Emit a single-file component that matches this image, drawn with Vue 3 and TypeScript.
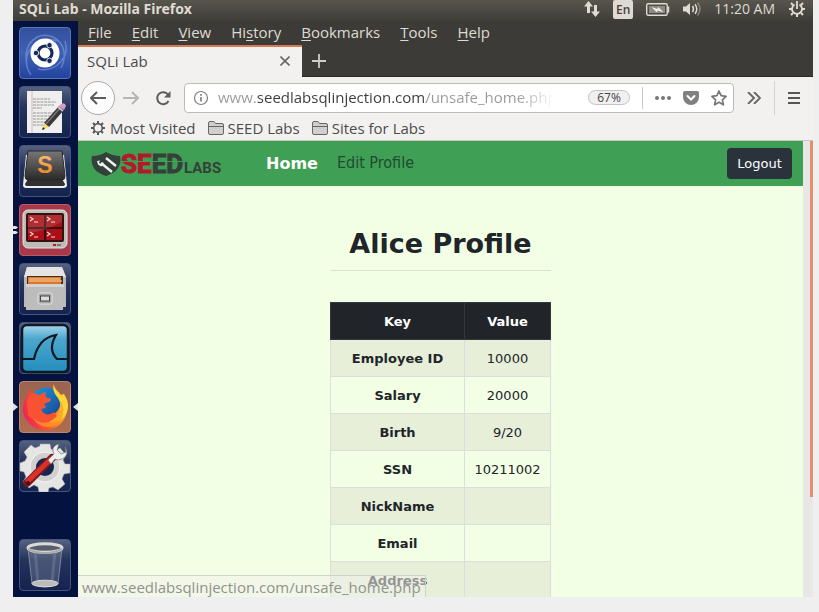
<script setup lang="ts">
import { ref } from 'vue'

interface MenuEntry { key: string; rest: string; before?: string }
interface ProfileRow { key: string; value: string }

const menus: MenuEntry[] = [
  { key: 'F', rest: 'ile' },
  { key: 'E', rest: 'dit' },
  { key: 'V', rest: 'iew' },
  { before: 'Hi', key: 's', rest: 'tory' },
  { key: 'B', rest: 'ookmarks' },
  { key: 'T', rest: 'ools' },
  { key: 'H', rest: 'elp' },
]

const rows: ProfileRow[] = [
  { key: 'Employee ID', value: '10000' },
  { key: 'Salary', value: '20000' },
  { key: 'Birth', value: '9/20' },
  { key: 'SSN', value: '10211002' },
  { key: 'NickName', value: '' },
  { key: 'Email', value: '' },
  { key: 'Address', value: '' },
]

const url = ref('www.seedlabsqlinjection.com/unsafe_home.php')
</script>

<template>
  <div class="desktop">
    <header class="panel">
      <span class="window-title">SQLi Lab - Mozilla Firefox</span>
      <div class="indicators">
        <svg class="ind-net" viewBox="0 0 18 18" width="18" height="18"><path d="M5.500 1 1 6.500h3V13h3V6.500h3zM12.500 17 8 11.500h3V5h3v6.500h3z" fill="#dfdbd2" /></svg>
        <span class="lang">En</span>
        <svg class="ind-bat" viewBox="0 0 24 13" width="24" height="13"><rect x=".7" y=".7" width="20.500" height="11.500" rx="1.500" fill="none" stroke="#dfdbd2" stroke-width="1.400" /><rect x="3" y="3" width="16" height="7" fill="#8d8a82" /><path d="M22.500 3.500v6" stroke="#dfdbd2" stroke-width="1.500" /><path d="m5.500 4 6 2 .5-2.200 5.500 5.400-6-1.800-.6 2z" fill="#f1eee7" /></svg>
        <svg class="ind-vol" viewBox="0 0 20 16" width="20" height="16"><path d="M1 5.500h3L8 2v12l-4-3.500H1z" fill="#dfdbd2" /><path d="M10.500 5q2 3 0 6M13 3.200q3.600 4.800 0 9.600" fill="none" stroke="#dfdbd2" stroke-width="1.500" /><path d="M15.500 1.500q5 6.500 0 13" fill="none" stroke="#88857c" stroke-width="1.500" /></svg>
        <span class="clock">11:20 AM</span>
        <svg class="ind-cog" viewBox="0 0 18 18" width="18" height="18"><g stroke="#dfdbd2" fill="none"><path d="M6.500 4.600a5 5 0 1 0 5 0" stroke-width="1.800" /><path d="M9 1v8" stroke-width="1.800" /><path d="m3 3 2 2M15 3l-2 2M1 9h3M14 9h3M3 15l2-2M15 15l-2-2M9 14v3" stroke-width="2" /></g></svg>
      </div>
    </header>

    <div class="workspace">
      <nav class="launcher" aria-label="Launcher">
        <button class="tile dash" aria-label="Dash">
          <svg viewBox="0 0 52 52"><path d="M8 38C3 15 20 4 34 10c12 6 14 20 8 31M12 48C-2 28 18 6 38 14M46 14c5 15-8 32-27 28" fill="none" stroke="#91a9e3" stroke-opacity=".5" stroke-width="1.500" /><circle cx="26" cy="26" r="14.500" fill="#fff" /><circle cx="26" cy="26" r="7" fill="none" stroke="#17295c" stroke-width="3.200" /><g fill="#17295c" stroke="#fff" stroke-width=".8"><circle cx="17" cy="26" r="2.700" /><circle cx="30.500" cy="18.200" r="2.700" /><circle cx="30.500" cy="33.800" r="2.700" /></g></svg>
        </button>
        <button class="tile" aria-label="Text Editor">
          <svg viewBox="0 0 52 52"><path d="M8 5h35v42H8z" fill="#efefed" /><path d="M13 5v42" stroke="#d8b9b9" /><path d="M14 13h17M14 16h23M14 19h21M14 22h9M14 27h20M14 30h23M14 33h18M14 36h20M14 39h12" stroke="#969696" stroke-dasharray="3 .7" /><path d="m25 37 15-17 5 4-15 17z" fill="#383838" /><path d="m27 38 15-17" stroke="#777" stroke-width="1.500" /><path d="m25 37 5 4-7 3z" fill="#eddc77" /><path d="m24 41-1 3 3-1z" fill="#222" /><path d="m40 20 2-2q4-2 5 2l-2 4z" fill="#d99acb" /><path d="m39 21 5 4" stroke="#c5c5c5" stroke-width="2" /></svg>
        </button>
        <button class="tile" aria-label="Sublime Text">
          <svg viewBox="0 0 52 52"><defs><linearGradient id="key" x2="0" y2="1"><stop stop-color="#777" /><stop offset=".6" stop-color="#494949" /><stop offset="1" stop-color="#292929" /></linearGradient><linearGradient id="orange" x2="0" y2="1"><stop stop-color="#ffc377" /><stop offset="1" stop-color="#ed7917" /></linearGradient></defs><path d="M7 10 4 40q0 3 3 3h37q4 0 4-3L45 10z" fill="#eee" /><path d="m9 34-3 5q0 2 3 2h34q3 0 3-2l-3-5z" fill="#303030" /><path d="M9 6h34l3 25q0 4-3 4H9q-3 0-3-4z" fill="url(#key)" stroke="#292929" /><text x="26" y="28" class="sublime" text-anchor="middle" fill="url(#orange)">S</text></svg>
        </button>
        <button class="tile terminal" aria-label="Terminator">
          <svg viewBox="0 0 52 52"><rect x="4" y="6" width="44" height="38" rx="5" fill="#bdbdb7" stroke="#e3e3df" /><rect x="7" y="9" width="38" height="29" rx="2" fill="#35110f" /><path d="M9 11h16v12H9zM27 11h16v12H27zM9 25h16v11H9zM27 25h16v11H27z" fill="#a90f16" /><path d="M9 11h34v7Q24 28 9 29z" fill="#fff" fill-opacity=".12" /><g fill="none" stroke="#f5d5d5" stroke-width="1.200"><path d="m11 13 3 2-3 2M15 18h4M28 13l3 2-3 2M32 18h4M11 28l3 2-3 2M15 33h4M28 28l3 2-3 2M32 33h4" /></g><path d="M34 41h3" stroke="#ce1515" stroke-width="2" /><path d="M38 41h4" stroke="#777" stroke-width="2" /></svg>
        </button>
        <button class="tile" aria-label="Files">
          <svg viewBox="0 0 52 52"><path d="M8 4h35l4 10v30H5V14z" fill="#b9b9b9" /><path d="M8 4h35l4 10H5z" fill="#e4e4e4" /><path d="M8 13h36v10H8z" fill="#40302a" /><path d="M9 14h33v8H9z" fill="#da762d" /><path d="M10 16h31M10 18h33" stroke="#ffd29a" /><path d="M7 21h38l-1 26H7z" fill="#bcbcbc" /><path d="M7 21h38v3H7z" fill="#d3d3d3" /><rect x="19" y="30" width="14" height="11" rx="2" fill="#a4a4a4" stroke="#e8e8e8" /><rect x="21.500" y="33" width="9" height="5" fill="#ddd" stroke="#444" /></svg>
        </button>
        <button class="tile" aria-label="Wireshark">
          <svg viewBox="0 0 52 52"><defs><linearGradient id="water" x2="0" y2="1"><stop stop-color="#a7d5eb" /><stop offset=".3" stop-color="#4ba6ce" /><stop offset="1" stop-color="#238ebd" /></linearGradient></defs><rect x="3" y="3" width="46" height="47" rx="5" fill="url(#water)" stroke="#111923" stroke-width="2.500" /><path d="M3 37h12c3-14 10-22 22-24-6 10-5 18 1 24h11" fill="none" stroke="#101820" stroke-width="2.200" /></svg>
        </button>
        <button class="tile firefox" aria-label="Firefox">
          <svg viewBox="0 0 52 52"><defs><linearGradient id="fox" x1="0" x2="1" y1=".6" y2=".3"><stop stop-color="#ed245a" /><stop offset=".4" stop-color="#fb5030" /><stop offset=".75" stop-color="#ff9a20" /><stop offset="1" stop-color="#ffc734" /></linearGradient><linearGradient id="globe" x2="1" y2="1"><stop stop-color="#119fe0" /><stop offset="1" stop-color="#20408f" /></linearGradient></defs><path d="M9 7c1 3 3 5 6 5 14-6 33 0 33 15 0 13-10 22-22 22S4 39 4 28c0-7 3-12 5-14z" fill="url(#fox)" /><circle cx="27" cy="21" r="14.500" fill="url(#globe)" /><path d="M8 20C9 13 14 11 21 14c2-2 4-3 6-3-1 2-1 4 1 6 2 0 4 0 4 2-2 3-6 2-7 5 4 1 1 4-3 4 2 6 8 7 13 3l4 6-14 8L9 35z" fill="#f95233" /><path d="M35 3c-2 5 0 9 4 14 6 10 2 19-9 24 13 1 19-7 19-16 0-6-2-8-4-12l-3 1c-3-4-7-6-7-11z" fill="#ffd635" /><path d="M39 17c6 9 2 19-9 24-6 2-12 0-16-4 5 9 15 11 23 7 10-6 9-20 2-27z" fill="#ff9b27" fill-opacity=".75" /></svg>
        </button>
        <button class="tile" aria-label="System Settings">
          <svg viewBox="0 0 52 52"><g fill="#e5e5e3" stroke="#aaa" stroke-width=".5"><path d="M21 4h10l1 5 4 2 5-3 6 7-3 5 2 4h5v9l-6 1-2 5 3 5-7 6-5-3-4 1-1 4H20l-1-5-4-2-5 3-6-6 3-5-2-5-4-1v-8l5-2 2-4-3-5 7-7 4 3 5-2z" /></g><circle cx="26" cy="27" r="15" fill="#d0d0ce" stroke="#f5f5f3" /><circle cx="26" cy="27" r="9" fill="#172650" /><path d="m8 43 25-25" stroke="#7e1818" stroke-width="8" stroke-linecap="round" /><path d="m9 41 24-23" stroke="#d8322d" stroke-width="5" stroke-linecap="round" /><path d="M29 20 35 14q-3-6 2-9l3-1-2 6 4 4 5-2-1-5q5 8-3 12-4 2-7 0l-4 5z" fill="#eee" stroke="#777" stroke-width=".7" /><circle cx="9" cy="43" r="2" fill="#401419" /></svg>
        </button>
        <button class="tile trash" aria-label="Trash">
          <svg viewBox="0 0 52 52"><path d="m9 9 4 36q13 6 26 0l4-36z" fill="#b2bccd" fill-opacity=".25" stroke="#aab2bc" stroke-opacity=".6" /><path d="m16 12 3 32M36 12l-3 32" stroke="#fff" stroke-opacity=".13" stroke-width="3" /><ellipse cx="26" cy="44.500" rx="13" ry="3.300" fill="#b9bcb9" stroke="#dadbd8" /><ellipse cx="26" cy="9" rx="17" ry="4.200" fill="#565e6e" stroke="#dadad6" stroke-width="3" /><path d="M9 10q17 8 34 0" stroke="#aaa" fill="none" stroke-width="2" /></svg>
        </button>
        <svg class="mark windows" viewBox="0 0 5 8"><path d="M0 0h3l2 1.500L3 3H0zM0 5h3l2 1.500L3 8H0z" fill="#dfe2e6" /></svg>
        <svg class="mark running" viewBox="0 0 5 8"><path d="m0 0 5 4-5 4z" fill="#dfe2e6" /></svg>
        <svg class="mark focused" viewBox="0 0 5 8"><path d="M5 0 0 4l5 4z" fill="#dfe2e6" /></svg>
      </nav>

      <section class="browser">
        <nav class="menubar" aria-label="Application menu">
          <button v-for="menu in menus" :key="menu.key + menu.rest">{{ menu.before }}<u>{{ menu.key }}</u>{{ menu.rest }}</button>
        </nav>
        <div class="tabs">
          <div class="tab">
            <span>SQLi Lab</span>
            <button aria-label="Close tab"><svg viewBox="0 0 10 10" width="10" height="10"><path d="m.5.5 9 9M9.500.5l-9 9" stroke="#666" stroke-width="1.600" /></svg></button>
          </div>
          <button class="new-tab" aria-label="New tab"><svg viewBox="0 0 14 14" width="14" height="14"><path d="M7 0v14M0 7h14" stroke="#cfccc5" stroke-width="1.800" /></svg></button>
        </div>

        <div class="toolbar">
          <button class="back" aria-label="Back"><svg viewBox="0 0 16 14" width="16" height="14"><path d="M16 7H1M7 1 1 7l6 6" fill="none" stroke="#5c5c5c" stroke-width="2" /></svg></button>
          <button class="nav-btn" aria-label="Forward"><svg viewBox="0 0 16 14" width="16" height="14"><path d="M0 7h15M9 1l6 6-6 6" fill="none" stroke="#b5b5b4" stroke-width="2" /></svg></button>
          <button class="nav-btn" aria-label="Reload"><svg viewBox="0 0 16 16" width="16" height="16"><path d="M13 4.500A6 6 0 1 0 13.500 11" fill="none" stroke="#5c5c5c" stroke-width="2" /><path d="M15.500 1v6.500H9z" fill="#5c5c5c" /></svg></button>
          <div class="urlbar">
            <svg viewBox="0 0 16 16" width="16" height="16"><circle cx="8" cy="8" r="6.500" fill="none" stroke="#808080" stroke-width="1.200" /><path d="M8 7v4.500M8 4v1.800" stroke="#808080" stroke-width="1.700" /></svg>
            <input v-model="url" type="text" aria-label="Address" />
            <button class="zoom">67%</button>
            <span class="divider"></span>
            <button aria-label="Page actions"><svg viewBox="0 0 18 16" width="18" height="16"><g fill="#777"><circle cx="3" cy="8" r="2" /><circle cx="9" cy="8" r="2" /><circle cx="15" cy="8" r="2" /></g></svg></button>
            <button aria-label="Save to Pocket"><svg viewBox="0 0 16 16" width="16" height="16"><path d="M2 1h12q2 0 2 2v4a8 8 0 0 1-16 0V3q0-2 2-2z" fill="#808080" /><path d="m4.500 6 3.500 3.500L11.500 6" fill="none" stroke="#fff" stroke-width="2" stroke-linecap="round" /></svg></button>
            <button aria-label="Bookmark this page"><svg viewBox="0 0 18 18" width="18" height="18"><path d="m9 2 2.100 4.700 5 .6-3.700 3.500 1 5L9 13.300l-4.400 2.500 1-5-3.700-3.500 5-.6z" fill="none" stroke="#777" stroke-width="1.700" stroke-linejoin="round" /></svg></button>
          </div>
          <button class="overflow" aria-label="More tools"><svg viewBox="0 0 14 12" width="14" height="12"><path d="m1 0 6 6-6 6M7 0l6 6-6 6" fill="none" stroke="#666" stroke-width="1.900" /></svg></button>
          <button class="app-menu" aria-label="Open menu"><svg viewBox="0 0 12 12" width="12" height="12"><path d="M0 1h12M0 6h12M0 11h12" stroke="#555" stroke-width="2" /></svg></button>
        </div>

        <nav class="bookmarks" aria-label="Bookmarks">
          <a href="#"><svg viewBox="0 0 16 16" width="16" height="16"><circle cx="8" cy="8" r="4.300" fill="none" stroke="#555" stroke-width="1.600" /><path d="M8 1v3M8 12v3M1 8h3M12 8h3M3 3l2 2M11 11l2 2M13 3l-2 2M5 11l-2 2" stroke="#555" stroke-width="2" /></svg>Most Visited</a>
          <a v-for="name in ['SEED Labs', 'Sites for Labs']" :key="name" href="#"><svg viewBox="0 0 16 14" width="16" height="14"><path d="M.5 12V2Q.5.500 2 .5h4l1.500 2H14q1.500 0 1.500 1.500v8q0 1.500-1.500 1.500H2Q.5 13.500.5 12z" fill="#cfcecd" stroke="#666" /><path d="M1 5.500h14" stroke="#666" /></svg>{{ name }}</a>
        </nav>

        <div class="viewport">
          <div class="page">
            <header class="navbar">
              <a class="brand" href="#">
                <svg viewBox="0 0 132 28" width="132" height="28" role="img" aria-label="SEEDLabs">
                  <path d="M1 6q8 0 14-4 7 4 14 4c2 9-3 17-14 20C4 23-1 15 1 6z" fill="#34403a" />
                  <path d="m10 13 11 9M15 8l10 8" stroke="#eef4ef" stroke-width="2.400" />
                  <path d="m6 11 3-.5-1 2.500 2 1 2-2 1 3-3 1.500-3-2z" fill="#eef4ef" />
                  <text x="30" y="23" class="seed"><tspan fill="#b01a2b" stroke="#b01a2b">SE</tspan><tspan fill="#34403a" stroke="#34403a">ED</tspan></text>
                  <text x="93" y="23" class="labs" fill="#34403a">LABS</text>
                  <path d="M31 11.500h61" stroke="#3fa055" />
                </svg>
              </a>
              <a class="home" href="#">Home</a>
              <a class="edit" href="#">Edit Profile</a>
              <button class="logout">Logout</button>
            </header>
            <main>
              <h1>Alice Profile</h1>
              <table>
                <thead><tr><th scope="col" class="key">Key</th><th scope="col">Value</th></tr></thead>
                <tbody>
                  <tr v-for="row in rows" :key="row.key"><th scope="row">{{ row.key }}</th><td>{{ row.value }}</td></tr>
                </tbody>
              </table>
            </main>
          </div>
          <div class="scroll-track"></div>
          <div class="window-edge"><div></div></div>
          <div class="status">www.seedlabsqlinjection.com/unsafe_home.php</div>
        </div>
      </section>
    </div>
  </div>
</template>

<style>
body { background: #efefef; }
</style>

<style scoped>
* { box-sizing: border-box; }
button { border: 0; padding: 0; margin: 0; background: none; font: inherit; color: inherit; display: flex; align-items: center; justify-content: center; }
a { text-decoration: none; color: inherit; }
svg { display: block; flex: none; }
.desktop { height: 100vh; padding: 0 6px 15px 13px; display: flex; flex-direction: column; background: #efefef; font-family: "Open Sans", "Noto Sans", sans-serif; font-size: 15px; color: #4c4c4c; overflow: hidden; }
.panel { flex: none; height: 21px; display: flex; justify-content: space-between; padding: 0 7px 0 6px; background: linear-gradient(#58554d, #3e3d38); color: #dfdbd2; font-size: 14px; line-height: 18px; }
.window-title { font-family: "Noto Sans", sans-serif; font-weight: 700; }
.indicators { display: flex; align-items: flex-start; }
.lang { width: 20px; height: 19px; margin: 0 13px 0 12px; background: #dfdbd2; color: #45433d; border-radius: 2px; text-align: center; font-size: 12px; font-weight: 600; line-height: 19px; }
.ind-bat { margin: 3px 12px 0 0; }
.ind-vol { margin: 1px 12px 0 0; }
.clock { margin-right: 13px; }
.workspace { flex: 1; min-height: 0; display: flex; }
.launcher { position: relative; flex: none; width: 65px; padding: 6px; display: flex; flex-direction: column; gap: 7px; background: #03123f; }
.tile { flex: none; width: 52px; height: 52px; border: 1px solid #47557b; border-radius: 4px; background: linear-gradient(#56617f 0, #25335c 40%, #14234f); }
.tile svg { width: 52px; height: 52px; }
.dash { background: linear-gradient(#32509c, #3f61b4 50%, #23449d); border-color: #5574ba; }
.terminal { background: #a8394a; border-color: #b95a67; }
.firefox { background: linear-gradient(#9b644f, #b16c50); border-color: #bc856e; }
.trash { margin-top: auto; }
.mark { position: absolute; width: 5px; height: 8px; }
.windows { left: 0; top: 205px; }
.running { left: 0; top: 382px; }
.focused { right: 0; top: 382px; }
.browser { flex: 1; min-width: 0; display: flex; flex-direction: column; background: #f2f1f0; }
.menubar { flex: none; height: 24px; display: flex; gap: 20px; padding: 0 0 2px 10px; background: #3d3b37; color: #dfdbd2; }
.menubar u { text-underline-offset: 2px; }
.tabs { flex: none; height: 32px; display: flex; background: #3c3b37; border-bottom: 1px solid #292824; }
.tab { width: 224px; height: 32px; border-top: 2px solid #d97a56; background: #f2f1f0; display: flex; justify-content: space-between; align-items: center; padding: 0 12px 2px 9px; color: #4c4c4c; }
.new-tab { width: 34px; }
.toolbar { flex: none; height: 41px; display: flex; align-items: center; padding-left: 3px; }
.back { width: 34px; height: 34px; border: 1px solid #aaa; border-radius: 50%; background: #fcfcfc; }
.nav-btn { width: 32px; height: 32px; }
.urlbar { flex: 1; min-width: 0; height: 30px; margin-left: 5px; display: flex; align-items: center; padding: 0 5px 0 8px; border: 1px solid #bcbbba; border-radius: 4px; background: #fff; }
.urlbar input { flex: 1; min-width: 0; height: 28px; margin: 0 36px 0 9px; border: 0; padding: 0 0 1px; outline: 0; font: inherit; font-size: 15px; color: transparent; background: linear-gradient(90deg, #999 0 39px, #3c3c3c 39px 208px, #999 208px 300px, #fff 336px); background-clip: text; -webkit-background-clip: text; }
.zoom { width: 42px; height: 15px; border: 1px solid #c3c3c3; border-radius: 8px; background: #f0f0f0; color: #444; font-size: 12px; }
.divider { width: 1px; height: 22px; margin: 0 11px 0 12px; background: #c8c8c8; }
.urlbar > button + button { margin-left: 11px; }
.overflow { width: 40px; height: 32px; }
.app-menu { width: 39px; height: 34px; border-left: 1px solid #d3d2d1; }
.bookmarks { flex: none; height: 23px; display: flex; align-items: center; gap: 12px; padding: 0 0 3px 12px; border-bottom: 1px solid #c9c9c5; }
.bookmarks a { display: flex; align-items: center; gap: 4px; }
.viewport { position: relative; flex: 1; min-height: 0; display: flex; overflow: hidden; }
.page { flex: 1; min-width: 0; overflow: hidden; background: #f3ffe4; font-family: "DejaVu Sans", sans-serif; color: #212529; }
.scroll-track { width: 7px; background: #e7e7e6; }
.window-edge { width: 3px; background: #e9e8e7; }
.window-edge div { height: 78%; background: #e28f6e; }
.navbar { height: 45px; display: flex; align-items: center; padding: 0 11px 0 13px; background: #3fa055; font-size: 16px; }
.home { margin-left: 43px; color: #fff; font-weight: 700; }
.edit { margin-left: 19px; padding-bottom: 2px; color: #214a32; font-family: "DejaVu Sans Condensed", "DejaVu Sans", sans-serif; font-stretch: condensed; }
.logout { width: 65px; height: 31px; margin-left: auto; border-radius: 4px; background: #2a333b; color: #fff; font-size: 13px; }
.seed { font: 700 26px Roboto, sans-serif; }
.labs { font: 700 15px Roboto, sans-serif; }
.sublime { font: 700 23px "Liberation Sans", sans-serif; }
main { width: 221px; margin: 0 auto; padding-top: 42px; }
h1 { margin: 0 0 31px; padding-bottom: 10px; border-bottom: 1px solid #d9e3cd; font-size: 27px; line-height: 32px; text-align: center; white-space: nowrap; }
table { width: 100%; table-layout: fixed; border-collapse: collapse; font-size: 13px; text-align: center; }
.key { width: 134px; }
th, td { height: 37px; padding: 0; border: 1px solid #d9dfdc; }
thead th { background: #212529; color: #fff; border-color: #32383e; }
tbody tr:nth-child(odd) { background: #e7efd9; }
.status { position: absolute; left: 0; bottom: 0; height: 22px; padding: 0 4px; border: solid #d0d2c9; border-width: 1px 1px 0 0; background: rgba(240, 241, 235, .55); color: #90938b; font-size: 15px; line-height: 22px; white-space: nowrap; }
</style>
